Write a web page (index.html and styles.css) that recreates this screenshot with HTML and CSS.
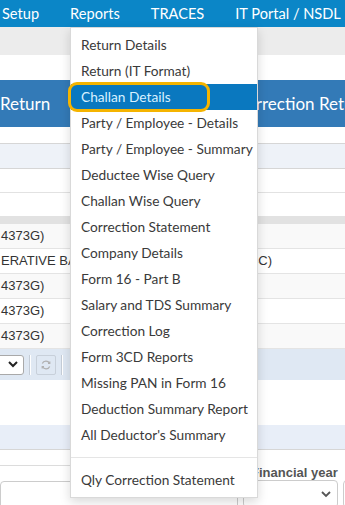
FILE: index.html
```html
<!DOCTYPE html>
<html>
<head>
    <title>Reports</title>
    <link rel="stylesheet" href="styles.css">
</head>
<body>
    <div class="topnav">
        <span class="nav-item">Setup</span>
        <span class="nav-item">Reports</span>
        <span class="nav-item">TRACES</span>
        <span class="nav-item">IT Portal / NSDL</span>
    </div>
    <div class="subbar"></div>

    <div class="page">
        <div class="panel-heading">
            <span class="tab-left">Return</span>
            <span class="tab-right">Correction Return</span>
        </div>
        <div class="spacer"></div>
        <div class="info-row"></div>
        <div class="plain-row"></div>
        <div class="plain-row"></div>
        <div class="table-head"></div>
        <div class="grid">
            <div class="grid-row">4373G)</div>
            <div class="grid-row">
                <div class="deductor">
                    <span>ERATIVE BANK LTD</span>
                    <span>(MUMB01234C)</span>
                </div>
            </div>
            <div class="grid-row">4373G)</div>
            <div class="grid-row">4373G)</div>
            <div class="grid-row">4373G)</div>
        </div>
        <div class="toolbar">
            <div class="pager-select">
                <svg width="10" height="7" viewBox="0 0 10 7"><polyline points="1,1 5,5 9,1" fill="none" stroke="#222" stroke-width="2"/></svg>
            </div>
            <div class="sep"></div>
            <div class="tool-btn">
                <svg width="12" height="12" viewBox="0 0 12 12" fill="none" stroke="#b0b0b0" stroke-width="1.2">
                    <path d="M9.5 4.2A4 4 0 0 0 2.3 4.6"/>
                    <path d="M8 4.3h1.8V2.5"/>
                    <path d="M2.5 7.8A4 4 0 0 0 9.7 7.4"/>
                    <path d="M4 7.7H2.2v1.8"/>
                </svg>
            </div>
            <div class="sep"></div>
        </div>
        <div class="gap"></div>
        <div class="band"></div>
        <div class="gap-small"></div>
        <div class="form-row">
            <div class="field field-left">
                <label>&nbsp;</label>
                <div class="select-box"></div>
            </div>
            <div class="field field-year">
                <label>Financial year</label>
                <div class="select-box">
                    <svg width="10" height="7" viewBox="0 0 10 7"><polyline points="1,1 5,5 9,1" fill="none" stroke="#555" stroke-width="1.8"/></svg>
                </div>
            </div>
            <div class="field field-next">
                <label>&nbsp;</label>
                <div class="select-box"></div>
            </div>
        </div>
    </div>

    <ul class="dropdown">
        <li>Return Details</li>
        <li>Return (IT Format)</li>
        <li class="active">Challan Details</li>
        <li>Party / Employee - Details</li>
        <li>Party / Employee - Summary</li>
        <li>Deductee Wise Query</li>
        <li>Challan Wise Query</li>
        <li>Correction Statement</li>
        <li>Company Details</li>
        <li>Form 16 - Part B</li>
        <li>Salary and TDS Summary</li>
        <li>Correction Log</li>
        <li>Form 3CD Reports</li>
        <li>Missing PAN in Form 16</li>
        <li>Deduction Summary Report</li>
        <li>All Deductor's Summary</li>
        <li class="divider"></li>
        <li>Qly Correction Statement</li>
    </ul>
    <div class="focus-ring"></div>
</body>
</html>
```

FILE: styles.css
```css
body {
    margin: 0;
    padding: 0;
    width: 345px;
    height: 505px;
    overflow: hidden;
    position: relative;
    background-color: #fff;
    font-family: 'Liberation Sans', Arial, sans-serif;
    font-size: 13px;
    color: #333;
}
.topnav {
    height: 27px;
    background-color: #0b86c7;
    display: flex;
    align-items: center;
    gap: 31px;
    padding-left: 2px;
    white-space: nowrap;
    overflow: hidden;
}
.nav-item {
    flex-shrink: 0;
    font-family: 'Lato', sans-serif;
    font-size: 14.6px;
    color: #fff;
}
.subbar {
    height: 28px;
    background-color: #ececec;
}
.page {
    padding-top: 25px;
}
.panel-heading {
    height: 47px;
    background-color: #337ab7;
    display: flex;
    align-items: center;
    white-space: nowrap;
    overflow: hidden;
    font-family: 'Lato', sans-serif;
    font-size: 17px;
    color: #fff;
}
.tab-left {
    flex-shrink: 0;
    width: 235px;
}
.tab-right {
    flex-shrink: 0;
}
.spacer {
    height: 16px;
    border-bottom: 1px solid #d6d6d6;
}
.info-row {
    height: 24px;
    background-color: #eef2f8;
    border-bottom: 1px solid #d6d6d6;
}
.plain-row {
    height: 23px;
    border-bottom: 1px solid #e2e2e2;
}
.plain-row + .plain-row {
    border-bottom: none;
}
.table-head {
    height: 8px;
    background-color: #e2e2e2;
}
.grid-row {
    height: 24px;
    line-height: 24px;
    border-bottom: 1px solid #e4e4e4;
    white-space: nowrap;
    overflow: hidden;
    padding-left: 1px;
}
.grid-row:nth-child(odd) {
    background-color: #f9f9f9;
}
.deductor {
    width: 271px;
    display: flex;
    justify-content: space-between;
    overflow: hidden;
}
.toolbar {
    height: 31px;
    background-color: #dfe8f3;
    display: flex;
    align-items: center;
    gap: 5px;
}
.pager-select {
    width: 34px;
    height: 20px;
    margin-left: -10px;
    background-color: #fff;
    border: 1px solid #a9a9a9;
    border-radius: 3px;
    box-sizing: border-box;
    display: flex;
    align-items: center;
    justify-content: flex-end;
    padding-right: 5px;
}
.sep {
    width: 1px;
    height: 20px;
    background-color: #c4ccd6;
    border-right: 1px solid #fff;
}
.tool-btn {
    width: 20px;
    height: 20px;
    border: 1px solid #c8d0da;
    border-radius: 2px;
    box-sizing: border-box;
    display: flex;
    align-items: center;
    justify-content: center;
}
.gap {
    height: 45px;
}
.band {
    height: 24px;
    background-color: #e8eef8;
    border-bottom: 1px solid #d6d6d6;
}
.gap-small {
    height: 15px;
}
.form-row {
    display: flex;
    gap: 5px;
    overflow: hidden;
}
.field {
    flex-shrink: 0;
}
.field-left {
    width: 238px;
    border-top: 1px solid #dcdcdc;
}
.field-left label {
    height: 14px;
}
.field-year {
    width: 95px;
}
.field-next {
    width: 60px;
}
.field label {
    display: block;
    height: 15px;
    line-height: 15px;
    font-weight: bold;
    font-size: 13px;
    color: #555;
    padding-left: 8px;
    white-space: nowrap;
}
.select-box {
    height: 28px;
    border: 1px solid #ccc;
    border-radius: 4px;
    box-sizing: border-box;
    display: flex;
    align-items: center;
    justify-content: flex-end;
    padding-right: 6px;
}
.dropdown {
    position: absolute;
    left: 70px;
    top: 27px;
    width: 188px;
    margin: 0;
    padding: 4px 0;
    list-style: none;
    background-color: #fff;
    border: 1px solid rgba(0,0,0,0.15);
    box-sizing: border-box;
    box-shadow: 0 4px 10px rgba(0,0,0,0.15);
    font-family: 'Lato', sans-serif;
    font-size: 13.7px;
}
.dropdown li {
    height: 26px;
    line-height: 26px;
    padding-left: 10px;
    color: #3a3a3a;
    white-space: nowrap;
}
.dropdown li.active {
    background-color: #0a78bf;
    color: #d8f1ff;
}
.dropdown li.divider {
    height: 1px;
    margin: 9px 0;
    background-color: #e5e5e5;
}
.focus-ring {
    position: absolute;
    left: 68px;
    top: 82px;
    width: 142px;
    height: 30px;
    border: 3px solid #f5b400;
    border-radius: 9px;
    box-sizing: border-box;
}
```
